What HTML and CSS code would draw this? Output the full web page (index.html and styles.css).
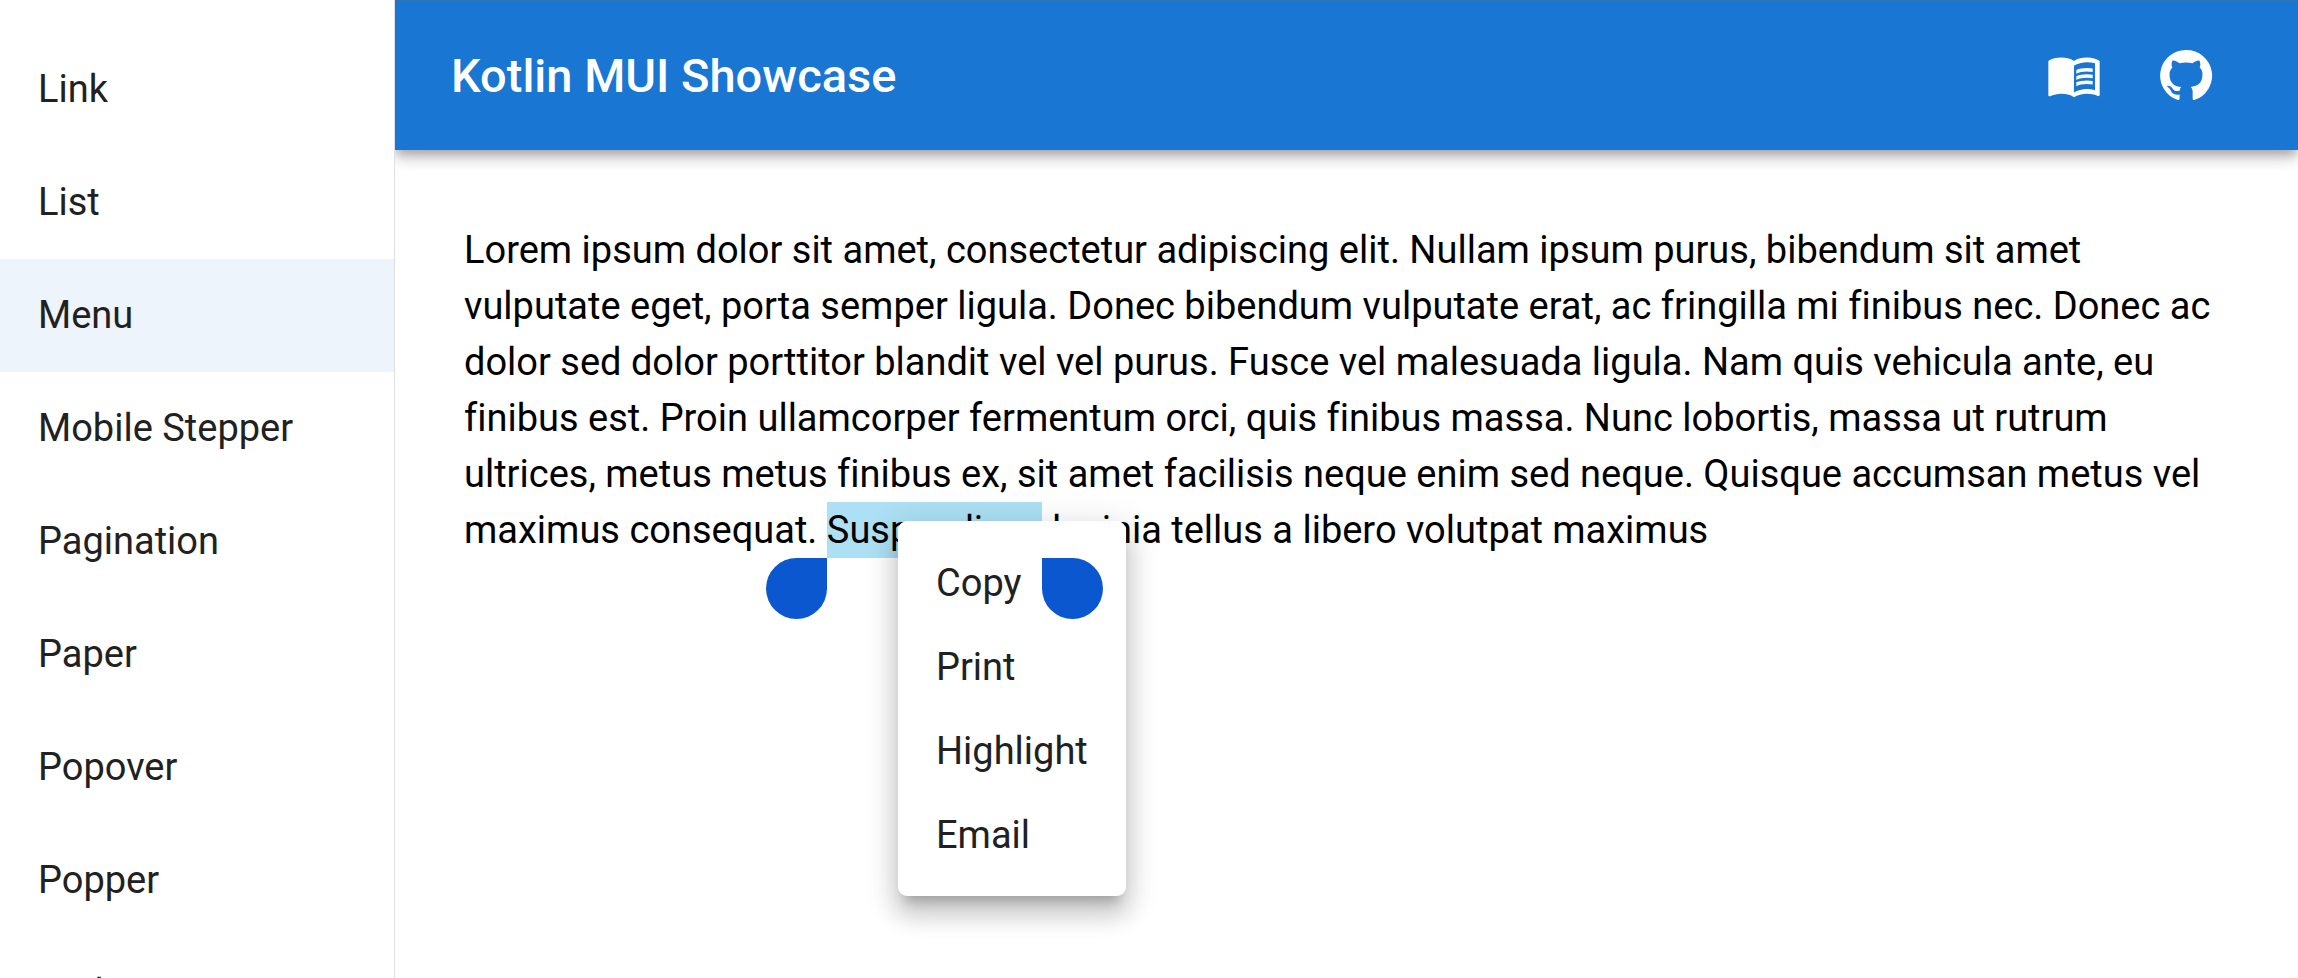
FILE: index.html
```html
<!DOCTYPE html>
<html lang="en">
<head>
<meta charset="utf-8">
<meta name="viewport" content="width=device-width, initial-scale=1">
<title>Kotlin MUI Showcase</title>
<link rel="stylesheet" href="styles.css">
</head>
<body>
<div class="layout">
  <nav class="sidebar" aria-label="Components">
    <a class="nav-item" href="#link">Link</a>
    <a class="nav-item" href="#list">List</a>
    <a class="nav-item nav-item-selected" href="#menu" aria-current="page">Menu</a>
    <a class="nav-item" href="#mobile-stepper">Mobile Stepper</a>
    <a class="nav-item" href="#pagination">Pagination</a>
    <a class="nav-item" href="#paper">Paper</a>
    <a class="nav-item" href="#popover">Popover</a>
    <a class="nav-item" href="#popper">Popper</a>
    <a class="nav-item" href="#radio">Radio</a>
  </nav>

  <div class="content">
    <header class="app-bar">
      <h1 class="title">Kotlin MUI Showcase</h1>
      <button class="icon-button" type="button" aria-label="Documentation">
        <svg class="icon" viewBox="0 0 24 24" aria-hidden="true">
          <path d="M21 5c-1.110-.35-2.330-.5-3.500-.5-1.950 0-4.050.4-5.500 1.500-1.450-1.100-3.550-1.500-5.500-1.500S2.450 4.900 1 6v14.650c0 .25.25.5.5.5.1 0 .15-.05.25-.05C3.100 20.450 5.050 20 6.500 20c1.950 0 4.050.4 5.500 1.500 1.350-.85 3.800-1.500 5.500-1.500 1.650 0 3.350.3 4.750 1.050.1.05.15.05.25.05.25 0 .5-.25.5-.5V6c-.6-.45-1.250-.75-2-1zm0 13.500c-1.100-.35-2.300-.5-3.500-.5-1.700 0-4.150.65-5.500 1.500V8c1.350-.85 3.800-1.500 5.500-1.500 1.200 0 2.400.15 3.500.5v11.500z"/>
          <path d="M17.500 10.500c.88 0 1.730.09 2.500.26V9.240c-.79-.15-1.640-.24-2.500-.24-1.700 0-3.240.29-4.500.83v1.660c1.130-.64 2.700-.99 4.500-.99zM13 12.490v1.660c1.130-.64 2.700-.99 4.500-.99.88 0 1.730.09 2.500.26V11.900c-.79-.15-1.640-.24-2.500-.24-1.700 0-3.240.3-4.500.83zm4.500 1.840c-1.700 0-3.240.29-4.500.83v1.660c1.130-.64 2.700-.99 4.500-.99.88 0 1.730.09 2.500.26v-1.520c-.79-.16-1.640-.24-2.500-.24z"/>
        </svg>
      </button>
      <button class="icon-button" type="button" aria-label="GitHub">
        <svg class="icon" viewBox="0 0 24 24" aria-hidden="true">
          <path d="M12 1.270a11 11 0 0 0-3.480 21.460c.55.09.73-.28.73-.55v-1.840c-3.030.64-3.670-1.460-3.670-1.460-.55-1.290-1.280-1.650-1.280-1.650-.92-.65.1-.65.1-.65 1.100 0 1.730 1.100 1.730 1.100.92 1.650 2.570 1.200 3.210.92a2 2 0 0 1 .64-1.470c-2.470-.27-5.040-1.190-5.040-5.500 0-1.100.46-2.100 1.200-2.840a3.760 3.760 0 0 1 0-2.930s.91-.28 3.110 1.100c1.800-.49 3.700-.49 5.500 0 2.100-1.380 3.020-1.100 3.020-1.100a3.760 3.760 0 0 1 .1 2.930c.83.74 1.200 1.740 1.200 2.940 0 4.210-2.570 5.130-5.040 5.400.45.37.82.92.82 2.020v3.030c0 .27.1.64.73.55A11 11 0 0 0 12 1.270"/>
        </svg>
      </button>
    </header>

    <main class="main">
      <p class="text">Lorem ipsum dolor sit amet, consectetur adipiscing elit. Nullam ipsum purus, bibendum sit amet vulputate eget, porta semper ligula. Donec bibendum vulputate erat, ac fringilla mi finibus nec. Donec ac dolor sed dolor porttitor blandit vel vel purus. Fusce vel malesuada ligula. Nam quis vehicula ante, eu finibus est. Proin ullamcorper fermentum orci, quis finibus massa. Nunc lobortis, massa ut rutrum ultrices, metus metus finibus ex, sit amet facilisis neque enim sed neque. Quisque accumsan metus vel maximus consequat. <mark class="selection">Suspendisse<span class="handle handle-start"></span><span class="handle handle-end"></span></mark> lacinia tellus a libero volutpat maximus</p>
    </main>

    <div class="context-menu" role="menu">
      <button class="menu-item" type="button" role="menuitem">Copy</button>
      <button class="menu-item" type="button" role="menuitem">Print</button>
      <button class="menu-item" type="button" role="menuitem">Highlight</button>
      <button class="menu-item" type="button" role="menuitem">Email</button>
    </div>
  </div>
</div>
</body>
</html>
```

FILE: styles.css
```css
* {
  box-sizing: border-box;
}

body {
  margin: 0;
  background: #fff;
  color: #000;
  font-family: Roboto, "Liberation Sans", sans-serif;
  font-size: 38px;
  font-variant-ligatures: none;
  line-height: 56px;
}

.layout {
  display: grid;
  grid-template-columns: 395px minmax(0, 1fr);
  height: 100vh;
  overflow: hidden;
}

.sidebar {
  position: relative;
  z-index: 2;
  display: flex;
  flex-direction: column;
  padding-top: 33px;
  overflow: hidden;
  background: #fff;
  border-right: 1px solid #e0e0e0;
}

.nav-item {
  flex: none;
  padding: 28px 38px 29px;
  color: #212121;
  text-decoration: none;
}

.nav-item-selected {
  background: #edf4fc;
}

.content {
  position: relative;
}

.app-bar {
  display: flex;
  align-items: center;
  height: 150px;
  padding: 0 56px;
  background: #1976d2;
  color: #fff;
  box-shadow:
    inset 0 1px #2f74b8,
    0 5px 9px -2px rgba(0, 0, 0, 0.2),
    0 9px 12px 0 rgba(0, 0, 0, 0.14),
    0 2px 23px 0 rgba(0, 0, 0, 0.12);
}

.title {
  flex: 1;
  margin: 0;
  font-size: 47px;
  font-weight: 500;
  line-height: 75px;
}

.icon-button {
  display: flex;
  padding: 28px;
  border: 0;
  border-radius: 50%;
  background: none;
  color: inherit;
}

.icon {
  width: 56px;
  height: 56px;
  fill: currentColor;
}

.main {
  padding: 72px 69px;
}

.text {
  margin: 0;
}

.selection {
  position: relative;
  display: inline-block;
  background: #ade0f4;
  color: inherit;
}

.handle {
  position: absolute;
  top: 100%;
  z-index: 4;
  width: 61px;
  height: 61px;
  background: #0b57d0;
}

.handle-start {
  right: 100%;
  border-radius: 50% 0 50% 50%;
}

.handle-end {
  left: 100%;
  border-radius: 0 50% 50% 50%;
}

.context-menu {
  position: absolute;
  top: 521px;
  left: 503px;
  z-index: 3;
  display: flex;
  flex-direction: column;
  padding: 20px 0 19px;
  border-radius: 9px;
  background: #fff;
  box-shadow:
    0 12px 12px -7px rgba(0, 0, 0, 0.2),
    0 19px 23px 2px rgba(0, 0, 0, 0.14),
    0 7px 33px 5px rgba(0, 0, 0, 0.12);
}

.menu-item {
  padding: 14px 38px;
  border: 0;
  background: none;
  color: #212121;
  font: inherit;
  text-align: left;
}
```
